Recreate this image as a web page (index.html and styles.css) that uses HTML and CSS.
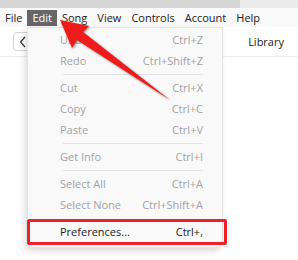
FILE: index.html
```html
<!DOCTYPE html>
<html lang="en">
<head>
  <meta charset="UTF-8" />
  <title>Edit menu</title>
  <link rel="stylesheet" href="styles.css">
</head>
<body>

<div class="titlebar">
  <div class="tab"></div>
  <div class="tab-light"></div>
</div>

<nav class="menubar">
  <span class="menu-item">File</span>
  <span class="menu-item active">Edit</span>
  <span class="menu-item">Song</span>
  <span class="menu-item">View</span>
  <span class="menu-item">Controls</span>
  <span class="menu-item">Account</span>
  <span class="menu-item">Help</span>
</nav>

<div class="toolbar">
  <div class="back">
    <svg width="8" height="12" viewBox="0 0 8 12"><path d="M6 1 L1.5 6 L6 11" fill="none" stroke="#333" stroke-width="1.2"/></svg>
  </div>
  <div class="library">Library</div>
</div>

<div class="dropdown">
  <div class="row"><span>Undo</span><span>Ctrl+Z</span></div>
  <div class="row"><span>Redo</span><span>Ctrl+Shift+Z</span></div>
  <div class="sep"></div>
  <div class="row"><span>Cut</span><span>Ctrl+X</span></div>
  <div class="row"><span>Copy</span><span>Ctrl+C</span></div>
  <div class="row"><span>Paste</span><span>Ctrl+V</span></div>
  <div class="sep"></div>
  <div class="row"><span>Get Info</span><span>Ctrl+I</span></div>
  <div class="sep"></div>
  <div class="row"><span>Select All</span><span>Ctrl+A</span></div>
  <div class="row"><span>Select None</span><span>Ctrl+Shift+A</span></div>
  <div class="row enabled highlight"><span>Preferences...</span><span>Ctrl+,</span></div>
</div>

<svg class="arrow" width="298" height="260" viewBox="0 0 298 260">
  <polygon points="60,20 89,26 83,32 170,100 77,40 72,48" fill="#f01c1c"/>
</svg>

</body>
</html>
```

FILE: styles.css
```css
* {
  box-sizing: border-box;
}

html, body {
  margin: 0;
  padding: 0;
  background: #fff;
  font-family: 'Open Sans', 'Noto Sans', sans-serif;
  width: 298px;
  height: 260px;
  overflow: hidden;
  position: relative;
}

.titlebar {
  display: flex;
  height: 8px;
}

.tab {
  width: 240px;
  background: #d6d6d6;
}

.tab-light {
  flex: 1;
  background: #ebebeb;
}

.menubar {
  display: flex;
  height: 19px;
  align-items: center;
  background: #f9f9f9;
  font-size: 11px;
  color: #222;
}

.menu-item {
  padding: 0 5px;
  height: 16px;
  line-height: 16px;
}

.menu-item.active {
  background: #676767;
  color: #fff;
}

.toolbar {
  display: flex;
  align-items: center;
  justify-content: space-between;
  height: 30px;
  padding: 0 14px 0 13px;
  border-bottom: 1px solid #ececec;
}

.back {
  width: 20px;
  height: 19px;
  border: 1px solid #d4d4d4;
  border-radius: 4px;
  display: flex;
  align-items: center;
  justify-content: center;
}

.library {
  font-size: 11px;
  color: #222;
}

.dropdown {
  position: absolute;
  left: 27px;
  top: 27px;
  width: 196px;
  background: #f9f9f9;
  border: 1px solid #e4e4e4;
  border-radius: 0 0 6px 6px;
  box-shadow: -2px 3px 6px rgba(0,0,0,0.15);
  padding: 1px 0 2px;
  font-size: 11px;
  color: #a3a3a3;
}

.row {
  display: flex;
  justify-content: space-between;
  height: 21px;
  line-height: 21px;
  padding: 0 19px 0 32px;
}

.sep {
  height: 1px;
  background: #e2e2e2;
  margin: 3px 19px 2px 35px;
}

.row.enabled {
  color: #1b1b1b;
}

.highlight {
  margin: 4px -5px 0 -1px;
  height: 26px;
  line-height: 20px;
  border: 3px solid #f0202a;
  border-radius: 2px;
  padding: 0 21px 0 30px;
}

.arrow {
  position: absolute;
  left: 0;
  top: 0;
  filter: drop-shadow(1px 1px 1px rgba(0,0,0,0.45));
}
```
